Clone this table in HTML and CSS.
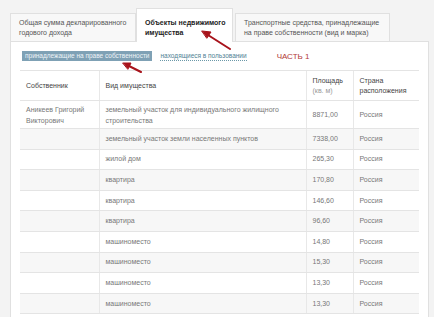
FILE: index.html
```html
<!DOCTYPE html>
<html lang="ru">
<head>
<meta charset="utf-8">
<link rel="stylesheet" href="styles.css">
</head>
<body>
<div class="page">
  <div class="tabs">
    <div class="tab tab-first">Общая сумма декларированного годового дохода</div>
    <div class="tab tab-active">Объекты недвижимого имущества</div>
    <div class="tab tab-third">Транспортные средства, принадлежащие на праве собственности (вид и марка)</div>
  </div>
  <div class="panel">
    <div class="subtabs">
      <span class="subtab subtab-on">принадлежащие на праве собственности</span>
      <span class="subtab subtab-off">находящиеся в пользовании</span>
      <span class="part">ЧАСТЬ 1</span>
    </div>
    <table class="grid">
      <colgroup>
        <col class="c-owner"><col class="c-type"><col class="c-area"><col class="c-country">
      </colgroup>
      <thead>
        <tr>
          <th>Собственник</th>
          <th>Вид имущества</th>
          <th>Площадь<br><span class="unit">(кв. м)</span></th>
          <th>Страна расположения</th>
        </tr>
      </thead>
      <tbody>
        <tr class="tall">
          <td>Аникеев Григорий Викторович</td>
          <td>земельный участок для индивидуального жилищного строительства</td>
          <td>8871,00</td>
          <td>Россия</td>
        </tr>
        <tr><td></td><td>земельный участок земли населенных пунктов</td><td>7338,00</td><td>Россия</td></tr>
        <tr><td></td><td>жилой дом</td><td>265,30</td><td>Россия</td></tr>
        <tr><td></td><td>квартира</td><td>170,80</td><td>Россия</td></tr>
        <tr><td></td><td>квартира</td><td>146,60</td><td>Россия</td></tr>
        <tr><td></td><td>квартира</td><td>96,60</td><td>Россия</td></tr>
        <tr><td></td><td>машиноместо</td><td>14,80</td><td>Россия</td></tr>
        <tr><td></td><td>машиноместо</td><td>15,30</td><td>Россия</td></tr>
        <tr><td></td><td>машиноместо</td><td>13,30</td><td>Россия</td></tr>
        <tr><td></td><td>машиноместо</td><td>13,30</td><td>Россия</td></tr>
      </tbody>
    </table>
  </div>
</div>
<svg class="arrows" width="434" height="317" viewBox="0 0 434 317">
  <g stroke="#a8131b" stroke-width="2" stroke-linecap="round" fill="#a8131b">
    <line x1="230" y1="49" x2="208" y2="35"/>
    <polygon points="202,31 211,32 207,38" stroke-width="1"/>
    <line x1="141" y1="72" x2="129" y2="66"/>
    <polygon points="123,63 131,63 128,69" stroke-width="1"/>
  </g>
</svg>
</body>
</html>
```

FILE: styles.css
```css
html, body {
  margin: 0;
  padding: 0;
}
body {
  background: #f3f3f3;
  font-family: "Liberation Sans", Arial, sans-serif;
  font-size: 7px;
  color: #777;
  width: 434px;
  height: 317px;
  overflow: hidden;
  position: relative;
}
.page {
  padding: 8px 5px 0 10px;
}
.tabs {
  display: flex;
  align-items: flex-end;
  height: 33px;
}
.tab {
  box-sizing: border-box;
  border: 1px solid #e0e0e0;
  border-bottom: none;
  background: #f8f8f8;
  color: #555;
  line-height: 10px;
  padding: 4px 8px 0 8px;
  height: 28px;
}
.tab-first {
  width: 126px;
}
.tab-active {
  width: 97px;
  height: 34px;
  margin-bottom: -1px;
  background: #fff;
  color: #222;
  font-weight: bold;
  padding: 9px 2px 0 8px;
  position: relative;
  z-index: 1;
}
.tab-third {
  width: 155px;
  margin-left: 2px;
}
.panel {
  background: #fff;
  border: 1px solid #e0e0e0;
  padding: 9px 9px 0 9px;
  height: 300px;
}
.subtabs {
  display: flex;
  align-items: center;
  height: 10px;
  padding-left: 2px;
}
.subtab {
  font-size: 6.5px;
  line-height: 10px;
}
.subtab-on {
  background: #7fa1b5;
  color: #eef4f8;
  padding: 0 3px;
}
.subtab-off {
  margin-left: 8px;
  color: #4f8294;
  line-height: 8px;
  border-bottom: 1px dotted #6a98a8;
}
.part {
  margin-left: 30px;
  color: #b23a36;
  font-size: 8px;
}
.grid {
  margin-top: 9px;
  width: 399px;
  border-collapse: collapse;
  table-layout: fixed;
}
.c-owner { width: 79px; }
.c-type { width: 207px; }
.c-area { width: 47px; }
.c-country { width: 66px; }
.grid th, .grid td {
  text-align: left;
  font-weight: normal;
  padding: 0 6px;
  line-height: 10px;
  vertical-align: middle;
  border-top: 1px solid #e4e4e4;
  border-bottom: 1px solid #e4e4e4;
  border-left: 1px solid #e8e8e8;
}
.grid th:first-child, .grid td:first-child {
  border-left: none;
}
.grid th {
  color: #444;
}
.grid thead tr {
  height: 30px;
}
.unit {
  color: #999;
}
.grid tbody tr {
  height: 20.6px;
}
.grid tbody tr.tall {
  height: 28px;
}
.grid tbody tr.tall td {
  line-height: 11px;
}
.grid tbody tr:nth-child(even) {
  background: #f7f7f7;
}
.arrows {
  position: absolute;
  top: 0;
  left: 0;
  z-index: 2;
  pointer-events: none;
}
```
